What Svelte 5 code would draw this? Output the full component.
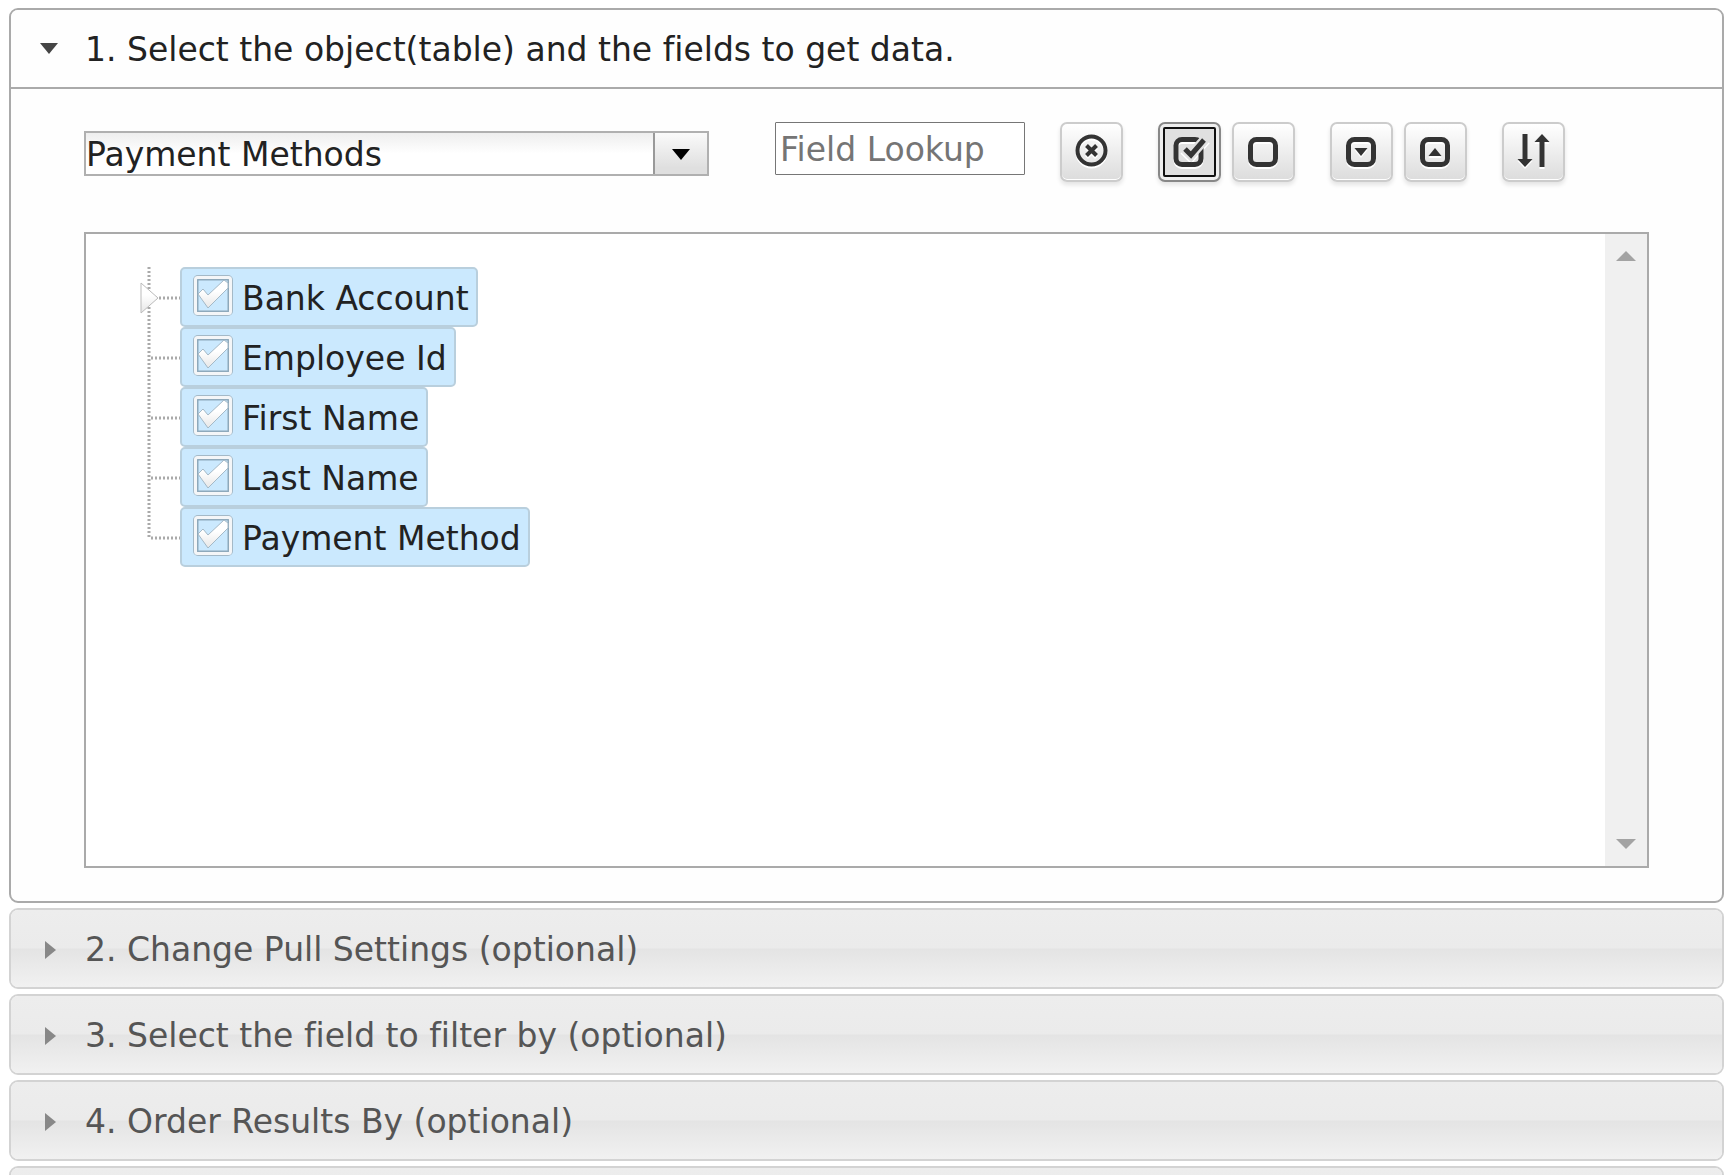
<script>
	let objects = ['Payment Methods', 'Bank Accounts', 'Employees'];
	let selected = 'Payment Methods';
	let lookup = '';
	let open = 1;
	let active = 'check';

	let fields = [
		{ name: 'Bank Account', checked: true, expandable: true },
		{ name: 'Employee Id', checked: true },
		{ name: 'First Name', checked: true },
		{ name: 'Last Name', checked: true },
		{ name: 'Payment Method', checked: true }
	];

	const sections = [
		{ id: 1, title: '1. Select the object(table) and the fields to get data.' },
		{ id: 2, title: '2. Change Pull Settings (optional)' },
		{ id: 3, title: '3. Select the field to filter by (optional)' },
		{ id: 4, title: '4. Order Results By (optional)' },
		{ id: 5, title: '' }
	];

	// toolbar buttons, grouped the way they are spaced
	const groups = [
		[{ id: 'clear', label: 'Clear lookup' }],
		[{ id: 'check', label: 'Check all' }, { id: 'uncheck', label: 'Uncheck all' }],
		[{ id: 'expand', label: 'Expand all' }, { id: 'collapse', label: 'Collapse all' }],
		[{ id: 'sort', label: 'Sort' }]
	];

	$: shown = fields.filter((f) => f.name.toLowerCase().includes(lookup.toLowerCase()));

	function run(id) {
		active = id;
		if (id === 'clear') lookup = '';
		if (id === 'check') fields = fields.map((f) => ({ ...f, checked: true }));
		if (id === 'uncheck') fields = fields.map((f) => ({ ...f, checked: false }));
		if (id === 'sort') fields = [...fields].reverse();
	}
</script>

<svg class="defs" width="0" height="0" aria-hidden="true">
	<linearGradient id="shine" x1="0" y1="0" x2="0" y2="1">
		<stop offset="0.4" stop-color="#fff" />
		<stop offset="1" stop-color="#e6e6e6" />
	</linearGradient>
</svg>

<main>
	{#each sections as section (section.id)}
		<section class:open={open === section.id}>
			<h3>
				<button class="head" aria-expanded={open === section.id} on:click={() => (open = section.id)}>
					<svg class="caret" viewBox="0 0 32 32" aria-hidden="true">
						{#if open === section.id}
							<path d="M7 9h18l-9 11z" />
						{:else}
							<path d="M12 7v18l11-9z" />
						{/if}
					</svg>
					{section.title}
				</button>
			</h3>

			{#if section.id === 1 && open === 1}
				<div class="body">
					<div class="toolbar">
						<div class="combo">
							<select bind:value={selected} aria-label="Object">
								{#each objects as o}
									<option>{o}</option>
								{/each}
							</select>
							<span class="arrow">
								<svg width="18" height="12" viewBox="0 0 18 12" aria-hidden="true"><path d="M0 1h18L9 12z" /></svg>
							</span>
						</div>

						<input class="lookup" type="text" placeholder="Field Lookup" aria-label="Field Lookup" bind:value={lookup} />

						{#each groups as group}
							<div class="group">
								{#each group as b}
									<button class="tool" class:active={active === b.id} aria-label={b.label} title={b.label} on:click={() => run(b.id)}>
										<svg viewBox="0 0 40 40" aria-hidden="true">
											{#if b.id === 'clear'}
												<circle cx="19.500" cy="18.500" r="14" stroke-width="4" />
												<path d="M14.500 13.500l10 10M24.500 13.500l-10 10" stroke-width="4" />
											{:else if b.id === 'check'}
												<rect x="6" y="7.500" width="25" height="25" rx="6" stroke-width="5" />
												<path class="halo" d="M14 16l7 7L36 6" stroke-width="10" />
												<path d="M15 17l6 6L34 8" stroke-width="5" />
											{:else if b.id === 'sort'}
												<path d="M11 2v27M28 35V8" stroke-width="5" />
												<path class="solid" d="M3.500 27h15l-7.500 8zM20.500 10h15l-7.500-8z" />
											{:else}
												<rect x="6.500" y="7.500" width="25" height="25" rx="6" stroke-width="5" />
												{#if b.id === 'expand'}
													<path class="solid" d="M12.500 16h13l-6.500 8z" />
												{:else if b.id === 'collapse'}
													<path class="solid" d="M12.500 24h13l-6.500-8z" />
												{/if}
											{/if}
										</svg>
									</button>
								{/each}
							</div>
						{/each}
					</div>

					<div class="tree">
						<ul>
							{#each shown as field, i (field.name)}
								<li>
									<svg class="lines" viewBox="0 0 41 60" aria-hidden="true">
										<path d={i === shown.length - 1 ? 'M10 0V32' : 'M10 0V60'} />
										<path d="M12 31H41" />
										{#if field.expandable}
											<path class="expander" d="M2 16v30L19 31z" />
										{/if}
									</svg>
									<label class:checked={field.checked}>
										<span class="box">
											<input type="checkbox" bind:checked={field.checked} />
											<svg viewBox="0 0 41 41" aria-hidden="true">
												<rect class="edge" x="2" y="2" width="36" height="37" rx="3" />
												<rect class="inner" x="4" y="4" width="32" height="33" />
												<rect class="frame" x="2.500" y="2.500" width="35" height="36" rx="2" />
												{#if field.checked}
													<path class="mark" d="M5 19l5-5 5 6L31 5l4 3v5L15 33z" />
												{/if}
											</svg>
										</span>
										{field.name}
									</label>
								</li>
							{/each}
						</ul>
						<div class="scroll" aria-hidden="true">
							<svg width="20" height="10" viewBox="0 0 20 10"><path d="M0 10h20L10 0z" /></svg>
							<svg width="20" height="10" viewBox="0 0 20 10"><path d="M0 0h20L10 10z" /></svg>
						</div>
					</div>
				</div>
			{/if}
		</section>
	{/each}
</main>

<style>
	:global(body) {
		margin: 0;
		background: #fff;
	}

	:global(html) {
		height: 100%;
		overflow: hidden;
	}

	.defs {
		position: absolute;
	}

	main {
		display: flex;
		flex-direction: column;
		gap: 5px;
		padding: 8px 8px 0 9px;
		font-family: Verdana, 'DejaVu Sans', sans-serif;
		font-size: 33px;
		font-variant-ligatures: none;
		color: #222;
	}

	section {
		border: 2px solid #d3d3d3;
		border-radius: 9px;
		overflow: hidden;
	}

	section.open {
		border-color: #aaa;
		background: #fefefe;
	}

	h3 {
		margin: 0;
		font: inherit;
		font-variant-ligatures: none;
	}

	.head {
		display: flex;
		align-items: center;
		gap: 20px;
		box-sizing: border-box;
		width: 100%;
		height: 77px;
		padding: 2px 22px 0;
		border: 0;
		background: linear-gradient(#ededed, #ebebeb 49%, #e4e4e4 51%, #f1f1f1);
		color: #555;
		font: inherit;
		font-variant-ligatures: none;
		text-align: left;
		cursor: pointer;
	}

	.open .head {
		height: 79px;
		border-bottom: 2px solid #aaa;
		background: #fefefe;
		color: #222;
	}

	.caret {
		width: 32px;
		height: 32px;
		fill: #888;
	}

	.open .caret {
		fill: #454545;
	}

	.body {
		padding: 33px 73px;
	}

	.toolbar {
		display: flex;
		gap: 35px;
		margin-bottom: 50px;
	}

	.combo {
		position: relative;
		box-sizing: border-box;
		width: 625px;
		height: 45px;
		margin: 9px 31px 0 0;
		border: 2px solid #b0b0b0;
	}

	select {
		display: block;
		width: 100%;
		height: 100%;
		padding: 2px 54px 0 0;
		border: 0;
		border-radius: 0;
		appearance: none;
		background: linear-gradient(#eee, #fff 50%);
		color: #222;
		font: inherit;
	}

	/* sits over the select so a click anywhere opens the list */
	.arrow {
		position: absolute;
		top: 0;
		right: 0;
		bottom: 0;
		display: flex;
		align-items: center;
		justify-content: center;
		width: 52px;
		border-left: 2px solid #999;
		background: linear-gradient(#fafafa, #dfdfdf 85%);
		pointer-events: none;
	}

	.lookup {
		box-sizing: border-box;
		width: 250px;
		height: 53px;
		padding: 2px 4px 0;
		border: 1px solid #767676;
		border-radius: 1px;
		background: #fff;
		color: #222;
		font: inherit;
	}

	.lookup::placeholder {
		color: #757575;
	}

	.group {
		display: flex;
		gap: 11px;
	}

	.tool {
		display: flex;
		align-items: center;
		justify-content: center;
		width: 63px;
		height: 60px;
		padding: 0;
		border: 2px solid #ccc;
		border-radius: 7px;
		background: linear-gradient(#fff, #dcdcdc);
		box-shadow: 0 3px 4px #e4e4e4, inset 0 -1px 0 #fff;
		cursor: pointer;
	}

	.tool.active {
		border-color: #888;
		outline: 2px solid #101010;
		outline-offset: -7px;
		background: #e0e0e0;
		box-shadow: 0 3px 4px #e4e4e4, inset 0 0 0 3px #eee;
	}

	.tool svg {
		width: 40px;
		height: 40px;
		fill: none;
		stroke: #333;
		filter: drop-shadow(0 2px 0 #fff);
	}

	.tool .solid {
		fill: #333;
		stroke: none;
	}

	.tool .halo {
		stroke: #e0e0e0;
	}

	.tree {
		display: flex;
		justify-content: space-between;
		box-sizing: border-box;
		min-height: 636px;
		border: 2px solid #aaa;
		background: #fff;
	}

	ul {
		margin: 0;
		padding: 33px 0 0 53px;
		list-style: none;
	}

	li {
		display: flex;
		height: 60px;
	}

	.lines {
		width: 41px;
		height: 60px;
		fill: none;
		stroke: #aaa;
		stroke-width: 3px;
		stroke-dasharray: 2 2;
	}

	.lines .expander {
		fill: url(#shine);
		stroke: #bbb;
		stroke-width: 1px;
		stroke-dasharray: none;
	}

	label {
		display: flex;
		align-items: center;
		gap: 8px;
		box-sizing: border-box;
		height: 60px;
		padding: 2px 7px 0 11px;
		border: 2px solid transparent;
		border-radius: 5px;
		white-space: nowrap;
	}

	label.checked {
		border-color: #b9cfdd;
		background: #cbe9fe;
	}

	.box {
		display: grid;
		margin-bottom: 5px;
	}

	.box input,
	.box svg {
		grid-area: 1 / 1;
		width: 41px;
		height: 41px;
		margin: 0;
	}

	.box input {
		appearance: none;
	}

	.box svg {
		fill: none;
		pointer-events: none;
	}

	.edge {
		stroke: #a4b9c7;
		stroke-width: 4px;
	}

	.inner {
		stroke: #8ea9bb;
		stroke-width: 3px;
	}

	.frame {
		stroke: #f4f6f8;
		stroke-width: 3px;
	}

	.mark {
		fill: url(#shine);
		stroke: #a4b9c7;
		stroke-width: 1px;
	}

	.scroll {
		display: flex;
		flex-direction: column;
		align-items: center;
		justify-content: space-between;
		box-sizing: border-box;
		width: 42px;
		padding: 17px 0;
		background: #f0f0f0;
		fill: #a3a3a3;
	}
</style>
